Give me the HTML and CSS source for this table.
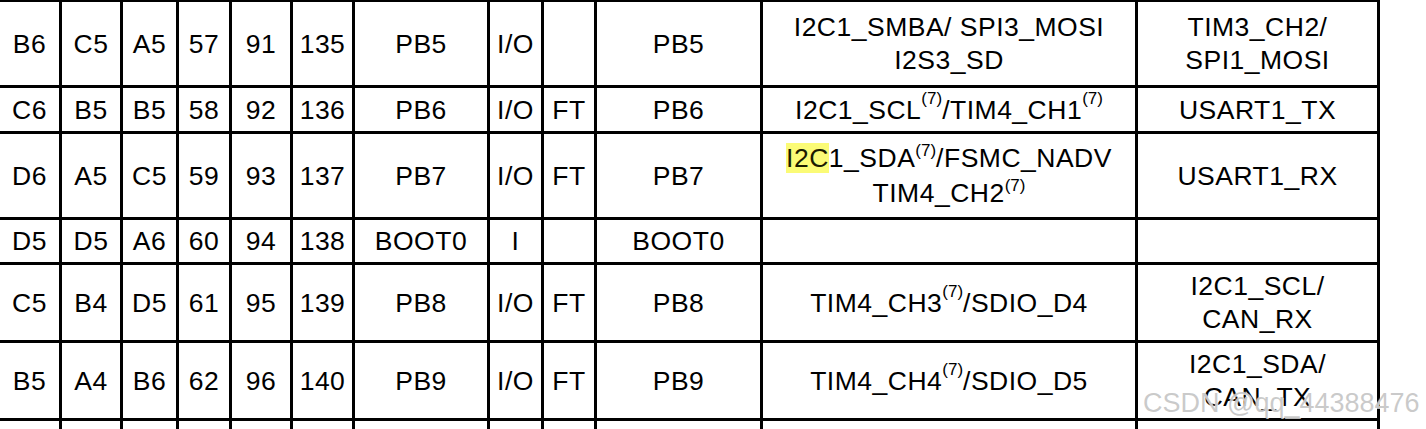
FILE: index.html
```html
<!DOCTYPE html>
<html lang="en">
<head>
<meta charset="utf-8">
<title>STM32 pinout table</title>
<link rel="stylesheet" href="styles.css">
</head>
<body>
<div class="sheet">
  <div class="pin-table">
    <!-- row 1 -->
    <div class="cell">B6</div><div class="cell">C5</div><div class="cell">A5</div><div class="cell">57</div><div class="cell">91</div><div class="cell">135</div>
    <div class="cell">PB5</div><div class="cell">I/O</div><div class="cell"></div><div class="cell">PB5</div>
    <div class="cell multi">I2C1_SMBA/ SPI3_MOSI<br>I2S3_SD</div>
    <div class="cell multi">TIM3_CH2/<br>SPI1_MOSI</div>
    <!-- row 2 -->
    <div class="cell">C6</div><div class="cell">B5</div><div class="cell">B5</div><div class="cell">58</div><div class="cell">92</div><div class="cell">136</div>
    <div class="cell">PB6</div><div class="cell">I/O</div><div class="cell">FT</div><div class="cell">PB6</div>
    <div class="cell">I2C1_SCL<sup class="note">(7)</sup>/TIM4_CH1<sup class="note">(7)</sup></div>
    <div class="cell">USART1_TX</div>
    <!-- row 3 -->
    <div class="cell">D6</div><div class="cell">A5</div><div class="cell">C5</div><div class="cell">59</div><div class="cell">93</div><div class="cell">137</div>
    <div class="cell">PB7</div><div class="cell">I/O</div><div class="cell">FT</div><div class="cell">PB7</div>
    <div class="cell multi wide-lines"><span><mark class="hit">I2C</mark>1_SDA<sup class="note">(7)</sup>/FSMC_NADV<br>TIM4_CH2<sup class="note">(7)</sup></span></div>
    <div class="cell">USART1_RX</div>
    <!-- row 4 -->
    <div class="cell">D5</div><div class="cell">D5</div><div class="cell">A6</div><div class="cell">60</div><div class="cell">94</div><div class="cell">138</div>
    <div class="cell">BOOT0</div><div class="cell">I</div><div class="cell"></div><div class="cell">BOOT0</div>
    <div class="cell"></div>
    <div class="cell"></div>
    <!-- row 5 -->
    <div class="cell">C5</div><div class="cell">B4</div><div class="cell">D5</div><div class="cell">61</div><div class="cell">95</div><div class="cell">139</div>
    <div class="cell">PB8</div><div class="cell">I/O</div><div class="cell">FT</div><div class="cell">PB8</div>
    <div class="cell">TIM4_CH3<sup class="note">(7)</sup>/SDIO_D4</div>
    <div class="cell multi">I2C1_SCL/<br>CAN_RX</div>
    <!-- row 6 -->
    <div class="cell">B5</div><div class="cell">A4</div><div class="cell">B6</div><div class="cell">62</div><div class="cell">96</div><div class="cell">140</div>
    <div class="cell">PB9</div><div class="cell">I/O</div><div class="cell">FT</div><div class="cell">PB9</div>
    <div class="cell">TIM4_CH4<sup class="note">(7)</sup>/SDIO_D5</div>
    <div class="cell multi">I2C1_SDA/<br>CAN_TX</div>
    <!-- row 7 (cut off) -->
    <div class="cell"></div><div class="cell"></div><div class="cell"></div><div class="cell"></div><div class="cell"></div><div class="cell"></div>
    <div class="cell"></div><div class="cell"></div><div class="cell"></div><div class="cell"></div><div class="cell"></div><div class="cell"></div>
  </div>
  <div class="watermark">CSDN @qq_44388476</div>
</div>
</body>
</html>
```

FILE: styles.css
```css
html, body {
  margin: 0;
  padding: 0;
  background: #ffffff;
}

body {
  font-family: "Liberation Sans", Arial, sans-serif;
  color: #000000;
  overflow: hidden;
  height: 429px;
}

.sheet {
  position: relative;
  width: 1426px;
  height: 429px;
  overflow: hidden;
}

.pin-table {
  display: grid;
  width: max-content;
  grid-template-columns: 59px 58px 53px 50px 58px 59px 132px 51px 50px 163px 372px 239px;
  grid-template-rows: 83px 43px 83px 42px 75px 75px 60px;
  gap: 3px;
  padding: 2px 3px 0 0;
  background: #000000;
}

.cell {
  display: flex;
  align-items: center;
  justify-content: center;
  text-align: center;
  background: #ffffff;
  font-size: 26.5px;
  line-height: 30px;
  letter-spacing: 0.5px;
  white-space: nowrap;
}

.multi {
  line-height: 33px;
}

.wide-lines {
  line-height: 35px;
}

.note {
  font-size: 17px;
  line-height: 0;
  letter-spacing: 0;
  vertical-align: baseline;
  position: relative;
  top: -11px;
}

.hit {
  background: #fbfb76;
  color: #1a1a00;
}

.watermark {
  position: absolute;
  left: 1143px;
  top: 388px;
  font-size: 27px;
  line-height: 30px;
  color: rgba(150, 150, 150, 0.5);
  text-shadow: 0 0 1px #ffffff, 1px 1px 0 rgba(255, 255, 255, 0.7);
  white-space: nowrap;
}
```
